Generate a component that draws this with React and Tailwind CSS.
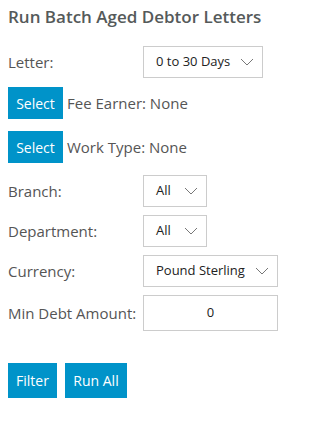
import React from 'react';

const Chevron = () => (
  <svg width="14" height="8" viewBox="0 0 14 8" fill="none" className="shrink-0">
    <path d="M1 1l6 6 6-6" stroke="#777" strokeWidth="1" />
  </svg>
);

const SelectBox = ({ value, width }) => (
  <div className={`flex items-center justify-between h-8 border border-[#cccccc] bg-white pl-3 pr-2 text-[13px] text-[#222] ${width}`}>
    <span>{value}</span>
    <Chevron />
  </div>
);

const Row = ({ label, children, className = '' }) => (
  <div className={`flex items-center ${className}`}>
    <div className="w-[135px] text-[15px] text-[#555]">{label}</div>
    {children}
  </div>
);

const App = () => {
  return (
    <div className="w-[324px] h-[421px] bg-white px-2 pt-[5px]" style={{ fontFamily: '"Open Sans", "Noto Sans", sans-serif' }}>
      <h1 className="text-[17px] font-semibold text-[#555a5a] leading-6">Run Batch Aged Debtor Letters</h1>

      <Row label="Letter:" className="mt-[17px]">
        <SelectBox value="0 to 30 Days" width="w-[120px]" />
      </Row>

      <div className="flex items-center mt-[9px]">
        <button className="h-8 w-[55px] bg-[#0093c9] text-white text-[14px]">Select</button>
        <span className="ml-1 text-[15px] text-[#555]">Fee Earner: None</span>
      </div>

      <div className="flex items-center mt-3">
        <button className="h-8 w-[55px] bg-[#0093c9] text-white text-[14px]">Select</button>
        <span className="ml-1 text-[15px] text-[#555]">Work Type: None</span>
      </div>

      <Row label="Branch:" className="mt-3">
        <SelectBox value="All" width="w-[64px]" />
      </Row>

      <Row label="Department:" className="mt-2">
        <SelectBox value="All" width="w-[64px]" />
      </Row>

      <Row label="Currency:" className="mt-2">
        <SelectBox value="Pound Sterling" width="w-[135px]" />
      </Row>

      <Row label="Min Debt Amount:" className="mt-2">
        <div className="flex items-center justify-center h-9 w-[135px] border border-[#cccccc] text-[13px] text-[#222]">0</div>
      </Row>

      <div className="flex gap-2 mt-8">
        <button className="h-[35px] w-[49px] bg-[#0093c9] text-white text-[14px]">Filter</button>
        <button className="h-[35px] w-[62px] bg-[#0093c9] text-white text-[14px]">Run All</button>
      </div>
    </div>
  );
};

export default App;
